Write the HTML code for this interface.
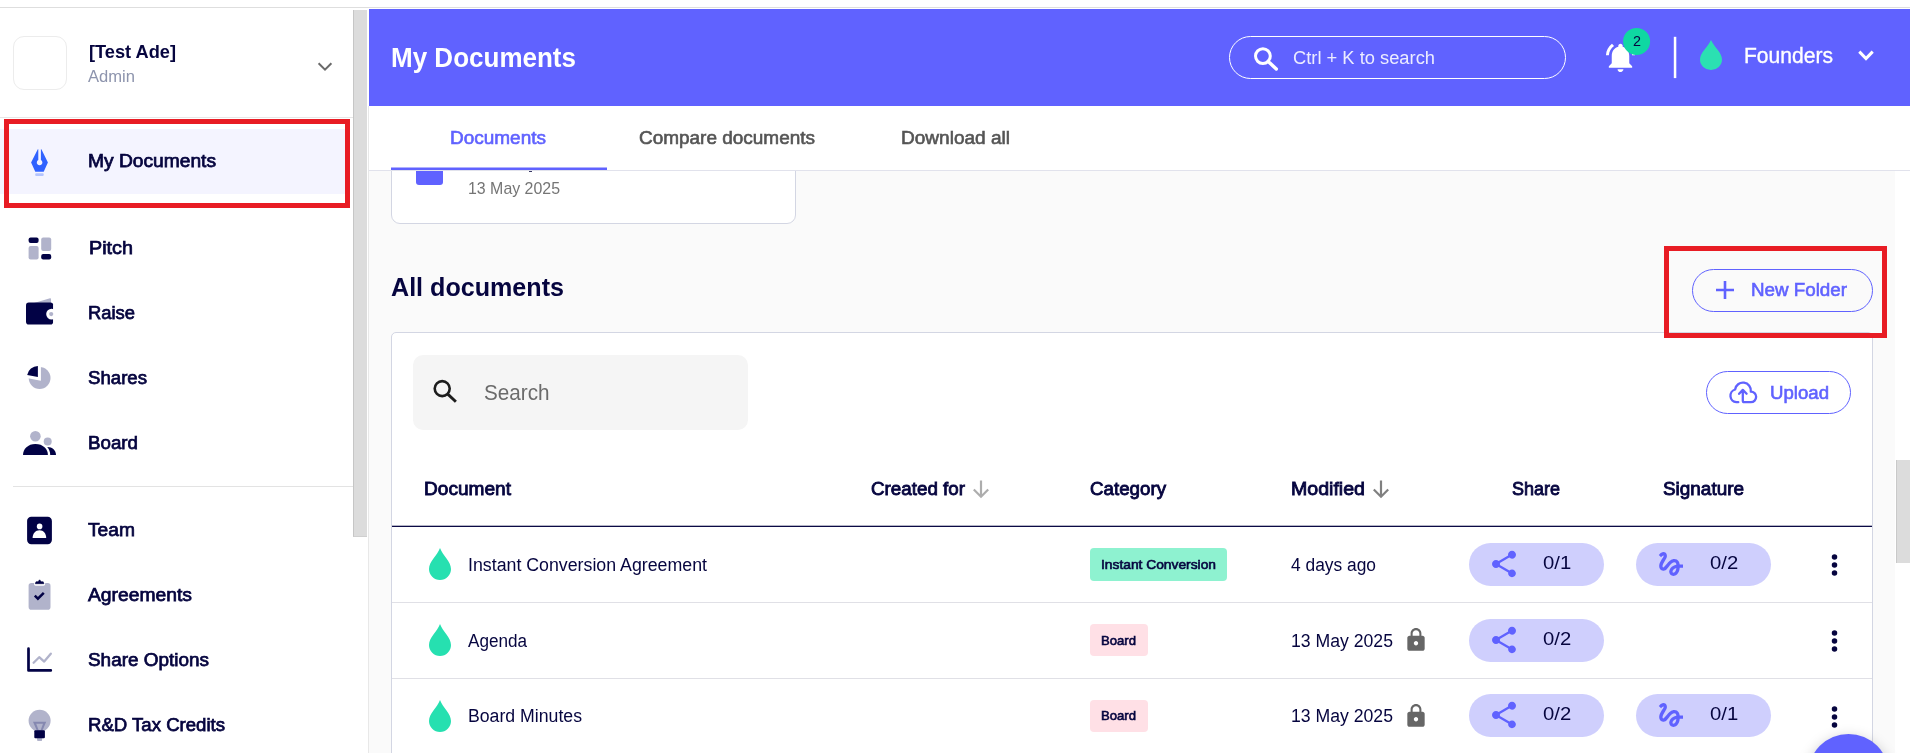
<!DOCTYPE html>
<html lang="en"><head><meta charset="utf-8"><title>My Documents</title>
<style>
html,body{margin:0;padding:0;background:#fff;}
body{width:1910px;height:753px;overflow:hidden;font-family:"Liberation Sans",sans-serif;}
#app{position:relative;width:1910px;height:753px;overflow:hidden;background:#fff;}
#app div,#app svg{position:absolute;box-sizing:border-box;}
.t{position:absolute;white-space:nowrap;transform-origin:0 50%;display:block;will-change:opacity;}

</style></head>
<body>
<div id="app">
<!-- top hairline -->
<div style="left:0;top:7px;width:1910px;height:1px;background:#dedede"></div>

<!-- ============ SIDEBAR ============ -->
<div style="left:0;top:8px;width:353px;height:745px;background:#fff"></div>
<!-- sidebar scrollbar -->
<div style="left:353px;top:8px;width:16px;height:745px;background:#fff"></div><div style="left:368px;top:106px;width:1px;height:647px;background:#e8e8e8"></div>
<div style="left:353px;top:10px;width:14px;height:527px;background:#dcdcdc;border-left:1px solid #c6c6c6;border-bottom:1px solid #cfcfcf"></div>
<!-- avatar -->
<div style="left:13px;top:36px;width:54px;height:54px;border:1px solid #ececec;border-radius:11px;background:#fff"></div>
<!-- chevron -->
<svg style="left:316px;top:60px" width="18" height="14" viewBox="0 0 18 14"><path d="M2.600 3.300 L9 9.700 L15.400 3.300" fill="none" stroke="#6a6a6a" stroke-width="2"/></svg>
<div style="left:0;top:117px;width:353px;height:1px;background:#e6e6e6"></div>
<!-- selected item -->
<div style="left:0;top:129px;width:350px;height:65px;background:#f4f4ff"></div>
<div style="left:4px;top:119px;width:346px;height:89px;border:5px solid #e81c24"></div>
<!-- divider between groups -->
<div style="left:13px;top:486px;width:340px;height:1px;background:#e3e3e3"></div>

<!-- ============ HEADER ============ -->
<div style="left:369px;top:9px;width:1541px;height:97px;background:#6062ff"></div>
<!-- search pill -->
<div style="left:1229px;top:36px;width:337px;height:43px;border:1.5px solid #fff;border-radius:22px"></div>
<svg style="left:1252px;top:45px" width="28" height="28" viewBox="0 0 28 28"><circle cx="10.900" cy="11.100" r="7.400" fill="none" stroke="#fff" stroke-width="3"/><path d="M16.200 16.400 L24.300 24" stroke="#fff" stroke-width="3.400" stroke-linecap="round"/></svg>
<!-- bell -->
<svg style="left:1603.200px;top:40.400px" width="35" height="35" viewBox="0 0 24 24"><path d="M7.580 4.080L6.150 2.650C3.750 4.480 2.170 7.300 2.030 10.500h2c.150-2.650 1.510-4.970 3.550-6.420zm12.390 6.420h2c-.150-3.200-1.730-6.020-4.120-7.850l-1.420 1.430c2.020 1.450 3.390 3.770 3.540 6.420zM18 11c0-3.070-1.640-5.640-4.500-6.320V4c0-.830-.670-1.500-1.500-1.500s-1.500.670-1.500 1.500v.680C7.630 5.360 6 7.920 6 11v5l-2 2v1h16v-1l-2-2v-5zm-6 11c.140 0 .270-.010.400-.040.650-.140 1.180-.580 1.440-1.180.100-.240.150-.500.150-.780h-4c.010 1.100.900 2 2.010 2z" fill="#fff"/></svg>
<svg style="left:1620px;top:25px" width="34" height="34" viewBox="0 0 34 34"><circle cx="16.600" cy="16.400" r="13.500" fill="#0fd8a2"/></svg>
<!-- vertical divider -->
<svg style="left:1672px;top:36px" width="6" height="43" viewBox="0 0 6 43"><rect x="1.800" y=".8" width="2.500" height="41.300" fill="#fff"/></svg>
<!-- drop -->
<svg style="left:1698px;top:39px" width="26" height="32" viewBox="0 0 26 32"><path d="M13 1 C10 8 2 13.500 2 20.500 a11 10.500 0 0 0 22 0 C24 13.500 16 8 13 1z" fill="#2be0b2"/></svg>
<!-- chevron -->
<svg style="left:1855px;top:47px" width="22" height="18" viewBox="0 0 22 18"><path d="M4.300 4.600 L11 11.500 L17.700 4.600" fill="none" stroke="#fff" stroke-width="3"/></svg>

<!-- ============ TABS ============ -->
<div style="left:369px;top:106px;width:1541px;height:65px;background:#fff;border-bottom:1px solid #e1e2ec"></div>

<!-- ============ CONTENT ============ -->
<div style="left:369px;top:171px;width:1526px;height:582px;background:#fafafa"></div>
<!-- page scrollbar -->
<div style="left:1895px;top:171px;width:15px;height:582px;background:#fff"></div>
<div style="left:1896px;top:460px;width:14px;height:103px;background:#dcdcdc;border-left:1px solid #c9c9c9"></div>
<!-- folder card -->
<div style="left:391px;top:150px;width:405px;height:74px;background:#fff;border:1px solid #d3d6e3;border-radius:9px;clip-path:inset(21px 0 0 0)"></div>
<div style="left:416px;top:171px;width:27px;height:14px;background:#6062ff;border-radius:0 0 3px 3px"></div>
<div style="left:529px;top:171px;width:3px;height:1px;background:#3a3a66"></div>
<!-- tab underline -->
<svg style="left:391px;top:166px" width="216" height="5" viewBox="0 0 216 5"><rect x="0" y="1.5" width="216" height="2.500" fill="#6062ff"/></svg>

<!-- new folder button -->
<div style="left:1692px;top:269px;width:181px;height:43px;border:1px solid #6062ff;border-radius:22px"></div>
<svg style="left:1713.600px;top:279px" width="22" height="22" viewBox="0 0 22 22"><path d="M11 2v18M2 11h18" stroke="#6062ff" stroke-width="2.600"/></svg>
<!-- table card -->
<div style="left:391px;top:332px;width:1482px;height:440px;background:#fff;border:1px solid #d3d6e3;border-radius:5px"></div>
<!-- red box around new folder -->
<div style="left:1664px;top:246px;width:223px;height:92px;border:5px solid #e81c24"></div>
<!-- search box -->
<div style="left:413px;top:355px;width:335px;height:75px;background:#f5f5f5;border-radius:10px"></div>
<svg style="left:431px;top:378px" width="28" height="28" viewBox="0 0 28 28"><circle cx="11.200" cy="10.600" r="7.500" fill="none" stroke="#1d1d1d" stroke-width="2.600"/><path d="M16.500 15.900 L24.900 23.800" stroke="#1d1d1d" stroke-width="2.900"/></svg>
<!-- upload button -->
<div style="left:1706px;top:371px;width:145px;height:43px;border:1px solid #6062ff;border-radius:22px"></div>
<svg style="left:1727px;top:378px" width="32" height="28" viewBox="0 0 32 28"><path d="M11.300 24.200L9.300 24.200A6.500 6.500 0 0 1 8.100 11.500A7.900 7.900 0 0 1 23.800 13.600A5.300 5.300 0 0 1 23.900 24.200L17.200 24.200Q15.800 24.200 15.800 22.800L15.800 12.200M12.100 15.800L15.800 11.900L19.600 15.800" fill="none" stroke="#6062ff" stroke-width="2.300" stroke-linecap="round" stroke-linejoin="round"/></svg>
<!-- sort arrows -->
<svg style="left:970.8px;top:479px" width="20" height="22" viewBox="0 0 20 22"><path d="M10 1.500v16M2.800 10.500L10 17.800l7.200-7.300" fill="none" stroke="#adadad" stroke-width="2.200"/></svg>
<svg style="left:1370.8px;top:479px" width="20" height="22" viewBox="0 0 20 22"><path d="M10 1.500v16M2.800 10.500L10 17.800l7.200-7.300" fill="none" stroke="#808080" stroke-width="2.200"/></svg>
<!-- header rule and row separators -->
<div style="left:392px;top:525px;width:1480px;height:1px;background:rgba(6,5,63,.3)"></div><div style="left:392px;top:526px;width:1480px;height:1px;background:#0b0a45"></div>
<div style="left:392px;top:602px;width:1480px;height:1px;background:#e0e0e6"></div>
<div style="left:392px;top:678px;width:1480px;height:1px;background:#e0e0e6"></div>
<!-- rows -->
<svg style="left:427px;top:547.4px" width="26" height="34" viewBox="0 0 26 34"><path d="M13 1 C10.200 8.500 2 14.500 2 22 a11 11 0 0 0 22 0 C24 14.500 15.800 8.500 13 1z" fill="#26e0b0"/></svg>
<div style="left:1090px;top:548.0px;width:137px;height:33px;background:#8ef2d0;border-radius:4px"></div>
<div style="left:1469px;top:542.9px;width:135px;height:43px;background:#cfcffd;border-radius:22px"></div>
<svg style="left:1487.5px;top:548.2px" width="32" height="32" viewBox="0 0 24 24"><path d="M18 16.08c-.76 0-1.440.3-1.960.77L8.910 12.700c.050-.230.090-.460.090-.700s-.040-.470-.090-.700l7.050-4.110c.540.500 1.250.810 2.040.810 1.660 0 3-1.340 3-3s-1.340-3-3-3-3 1.340-3 3c0 .240.040.470.090.700L8.040 9.810C7.500 9.310 6.790 9 6 9c-1.660 0-3 1.340-3 3s1.340 3 3 3c.790 0 1.500-.310 2.040-.810l7.120 4.160c-.050.210-.080.430-.080.650 0 1.610 1.310 2.920 2.920 2.920 1.610 0 2.920-1.310 2.920-2.920s-1.310-2.920-2.920-2.920z" fill="#6062ff"/></svg>
<div style="left:1636px;top:542.9px;width:135px;height:43px;background:#cfcffd;border-radius:22px"></div>
<svg style="left:1654.7px;top:547.8px" width="32" height="32" viewBox="0 0 24 24"><path d="M4.590 6.890c.700-.710 1.400-1.350 1.710-1.220.500.200 0 1.030-.300 1.520-.250.420-2.860 3.890-2.860 6.310 0 1.280.480 2.340 1.340 2.980.750.560 1.740.730 2.640.460 1.070-.310 1.950-1.400 3.060-2.770 1.210-1.490 2.830-3.440 4.080-3.440 1.630 0 1.650 1.010 1.760 1.790-3.780.640-5.380 3.670-5.380 5.370 0 1.700 1.440 3.090 3.210 3.090 1.630 0 4.290-1.330 4.690-6.100H21v-2.500h-2.470c-.150-1.650-1.090-4.200-4.030-4.200-2.250 0-4.180 1.910-4.940 2.840-.580.730-2.060 2.480-2.290 2.720-.250.300-.680.840-1.110.840-.450 0-.720-.830-.360-1.920.350-1.090 1.400-2.860 1.850-3.520.780-1.140 1.300-1.920 1.300-3.280C8.950 3.690 7.310 3 6.440 3 5.120 3 3.970 4 3.720 4.250c-.360.360-.660.660-.880.930l1.750 1.710zm9.290 11.660c-.310 0-.740-.260-.740-.720 0-.600.730-2.200 2.870-2.760-.300 2.690-1.430 3.480-2.130 3.480z" fill="#6062ff"/></svg>
<svg style="left:427px;top:622.8px" width="26" height="34" viewBox="0 0 26 34"><path d="M13 1 C10.200 8.500 2 14.500 2 22 a11 11 0 0 0 22 0 C24 14.500 15.800 8.500 13 1z" fill="#26e0b0"/></svg>
<div style="left:1090px;top:624px;width:58px;height:32px;background:#ffe0e6;border-radius:4px"></div>
<svg style="left:1402.8px;top:627.1px" width="26" height="26" viewBox="0 0 24 24"><path d="M18 8h-1V6c0-2.760-2.240-5-5-5S7 3.240 7 6v2H6c-1.100 0-2 .900-2 2v10c0 1.100.900 2 2 2h12c1.100 0 2-.900 2-2V10c0-1.100-.900-2-2-2zm-6 9c-1.100 0-2-.900-2-2s.900-2 2-2 2 .900 2 2-.900 2-2 2zm3.100-9H8.900V6c0-1.710 1.390-3.100 3.100-3.100 1.710 0 3.100 1.390 3.100 3.100v2z" fill="#666"/></svg>
<div style="left:1469px;top:619px;width:135px;height:43px;background:#cfcffd;border-radius:22px"></div>
<svg style="left:1487.5px;top:624.3px" width="32" height="32" viewBox="0 0 24 24"><path d="M18 16.08c-.76 0-1.440.3-1.960.77L8.910 12.700c.050-.230.090-.460.090-.700s-.040-.470-.090-.700l7.050-4.110c.540.500 1.250.810 2.040.810 1.660 0 3-1.340 3-3s-1.340-3-3-3-3 1.340-3 3c0 .240.040.470.090.700L8.040 9.810C7.500 9.310 6.790 9 6 9c-1.660 0-3 1.340-3 3s1.340 3 3 3c.790 0 1.500-.310 2.040-.810l7.120 4.160c-.050.210-.080.430-.080.650 0 1.610 1.310 2.920 2.920 2.920 1.610 0 2.920-1.310 2.920-2.920s-1.310-2.920-2.920-2.920z" fill="#6062ff"/></svg>
<svg style="left:427px;top:698.7px" width="26" height="34" viewBox="0 0 26 34"><path d="M13 1 C10.200 8.500 2 14.500 2 22 a11 11 0 0 0 22 0 C24 14.500 15.800 8.500 13 1z" fill="#26e0b0"/></svg>
<div style="left:1090px;top:700px;width:58px;height:32px;background:#ffe0e6;border-radius:4px"></div>
<svg style="left:1402.8px;top:702.7px" width="26" height="26" viewBox="0 0 24 24"><path d="M18 8h-1V6c0-2.760-2.240-5-5-5S7 3.240 7 6v2H6c-1.100 0-2 .900-2 2v10c0 1.100.900 2 2 2h12c1.100 0 2-.900 2-2V10c0-1.100-.900-2-2-2zm-6 9c-1.100 0-2-.900-2-2s.900-2 2-2 2 .900 2 2-.900 2-2 2zm3.100-9H8.900V6c0-1.710 1.390-3.100 3.100-3.100 1.710 0 3.100 1.390 3.100 3.100v2z" fill="#666"/></svg>
<div style="left:1469px;top:693.7px;width:135px;height:43px;background:#cfcffd;border-radius:22px"></div>
<svg style="left:1487.5px;top:699.0px" width="32" height="32" viewBox="0 0 24 24"><path d="M18 16.08c-.76 0-1.440.3-1.960.77L8.910 12.700c.050-.230.090-.460.090-.700s-.040-.470-.090-.700l7.050-4.110c.540.500 1.250.810 2.040.810 1.660 0 3-1.340 3-3s-1.340-3-3-3-3 1.340-3 3c0 .240.040.470.090.700L8.040 9.810C7.500 9.310 6.790 9 6 9c-1.660 0-3 1.340-3 3s1.340 3 3 3c.790 0 1.500-.310 2.040-.810l7.120 4.160c-.050.210-.080.430-.080.650 0 1.610 1.310 2.920 2.920 2.920 1.610 0 2.920-1.310 2.920-2.920s-1.310-2.920-2.920-2.920z" fill="#6062ff"/></svg>
<div style="left:1636px;top:693.7px;width:135px;height:43px;background:#cfcffd;border-radius:22px"></div>
<svg style="left:1654.7px;top:698.6px" width="32" height="32" viewBox="0 0 24 24"><path d="M4.590 6.890c.700-.710 1.400-1.350 1.710-1.220.500.200 0 1.030-.300 1.520-.250.420-2.860 3.890-2.860 6.310 0 1.280.480 2.340 1.340 2.980.750.560 1.740.730 2.640.460 1.070-.310 1.950-1.400 3.060-2.770 1.210-1.490 2.830-3.440 4.080-3.440 1.630 0 1.650 1.010 1.760 1.790-3.780.640-5.380 3.670-5.380 5.370 0 1.700 1.440 3.090 3.210 3.090 1.630 0 4.290-1.330 4.690-6.100H21v-2.500h-2.470c-.150-1.650-1.090-4.200-4.030-4.200-2.250 0-4.180 1.910-4.940 2.840-.580.730-2.060 2.480-2.290 2.720-.250.300-.680.840-1.110.840-.450 0-.720-.830-.360-1.920.350-1.090 1.400-2.860 1.850-3.520.780-1.140 1.300-1.920 1.300-3.280C8.950 3.690 7.310 3 6.440 3 5.120 3 3.970 4 3.720 4.250c-.360.360-.660.660-.880.930l1.750 1.710zm9.290 11.660c-.310 0-.740-.260-.740-.720 0-.600.730-2.200 2.870-2.760-.300 2.690-1.430 3.480-2.130 3.480z" fill="#6062ff"/></svg>
<svg style="left:1828px;top:551.0px" width="13" height="28" viewBox="0 0 13 28"><circle cx="6.500" cy="5.900" r="2.750" fill="#06053f"/><circle cx="6.500" cy="14" r="2.750" fill="#06053f"/><circle cx="6.500" cy="22.100" r="2.750" fill="#06053f"/></svg>
<svg style="left:1828px;top:626.7px" width="13" height="28" viewBox="0 0 13 28"><circle cx="6.500" cy="5.900" r="2.750" fill="#06053f"/><circle cx="6.500" cy="14" r="2.750" fill="#06053f"/><circle cx="6.500" cy="22.100" r="2.750" fill="#06053f"/></svg>
<svg style="left:1828px;top:702.6px" width="13" height="28" viewBox="0 0 13 28"><circle cx="6.500" cy="5.900" r="2.750" fill="#06053f"/><circle cx="6.500" cy="14" r="2.750" fill="#06053f"/><circle cx="6.500" cy="22.100" r="2.750" fill="#06053f"/></svg>
<div style="left:1808px;top:734px;width:81px;height:81px;border-radius:41px;background:#6062ff;box-shadow:0 4px 14px rgba(0,0,0,.25)"></div>
<!-- sidebar icons (absolute coords) -->
<svg style="left:0;top:0" width="80" height="753" viewBox="0 0 80 753">
<g id="ic-docs">
<path d="M37.800 149.200 L38.300 149.200 L38.300 160 A2.800 2.800 0 1 0 40.900 160 L40.900 149.200 L41.400 149.200 L47.900 162.600 L43.700 171.800 L35.300 171.800 L31.100 162.600 Z" fill="#3062ff"/>
<rect x="35.200" y="173.300" width="8.500" height="2.600" rx="1" fill="#b4c4ff"/>
</g>
<g id="ic-pitch">
<rect x="28.600" y="237.600" width="10" height="5.300" rx="2" fill="#020245"/>
<rect x="41.200" y="237.600" width="10" height="13.300" rx="2" fill="#b1b3cb"/>
<rect x="28.600" y="245.900" width="10" height="13.600" rx="2" fill="#b1b3cb"/>
<rect x="41.200" y="254.100" width="10" height="5.400" rx="2" fill="#020245"/>
</g>
<g id="ic-raise">
<path d="M34 303 L50 298.200 Q51 298 51 299 L51 303 Z" fill="#b1b3cb"/>
<rect x="26" y="302.600" width="27.200" height="21.900" rx="2.800" fill="#020245"/>
<circle cx="51.600" cy="314.100" r="5.400" fill="#fff"/>
<rect x="53.200" y="305" width="5" height="18" fill="#fff"/>
<circle cx="51.200" cy="314.100" r="2.100" fill="#b1b3cb"/>
</g>
<g id="ic-shares">
<circle cx="39.600" cy="378" r="10.900" fill="#b1b3cb"/>
<path d="M40.900 380.800 L40.900 360 L24 360 L24 377.600 Z" fill="#fff"/>
<path d="M37.900 377 L37.900 366 A10.900 10.900 0 0 0 27.200 374.900 Z" fill="#020245"/>
</g>
<g id="ic-board">
<circle cx="35.400" cy="436.300" r="5.300" fill="#b1b3cb"/>
<circle cx="47.700" cy="441.600" r="4" fill="#b1b3cb"/>
<path d="M23 454.900 C23 449 28 444 35.400 444 C43 444 47.900 449 47.900 454.900 Z" fill="#020245"/>
<path d="M47.200 447 C52.500 447 56 450.500 56 454.900 L50.200 454.900 C50.200 452 49.200 449.200 47.200 447 Z" fill="#020245"/>
</g>
<g id="ic-team">
<rect x="27.100" y="516.800" width="24.800" height="27.400" rx="4.200" fill="#020245"/>
<circle cx="39.600" cy="526.400" r="2.800" fill="#fff"/>
<path d="M32.600 537.900 C32.600 533.500 35.500 530.200 39.500 530.200 C43.500 530.200 46.200 533.500 46.200 537.900 Z" fill="#fff"/>
</g>
<g id="ic-agree">
<rect x="28.600" y="583" width="21.900" height="26.700" rx="2.800" fill="#b1b3cb"/>
<path d="M34 583 L34 582.500 L37.500 579 L41.700 579 L45.200 582.500 L45.200 583 L45.200 584 Q45.200 585.800 43.500 585.800 L35.700 585.800 Q34 585.800 34 584 Z" fill="#fff"/>
<path d="M35.300 583.700 L36 581.800 L38 581.800 L39.600 579.800 L41.200 581.800 L43.200 581.800 L43.900 583.700 Z" fill="#020245" stroke="#020245" stroke-width=".6" stroke-linejoin="round"/>
<path d="M34.800 595.700 L37.900 598.700 L43.800 592.900" fill="none" stroke="#020245" stroke-width="2.500"/>
</g>
<g id="ic-options">
<path d="M28.500 648.700 L28.500 670.400 L50.800 670.400" fill="none" stroke="#020245" stroke-width="2.700" stroke-linecap="round" stroke-linejoin="round"/>
<path d="M33.600 662.800 L39.200 657.200 L44.200 661.600 L50.800 653.700" fill="none" stroke="#b1b3cb" stroke-width="2.300" stroke-linecap="round" stroke-linejoin="round"/>
</g>
<g id="ic-rd">
<circle cx="39.600" cy="720.800" r="11" fill="#b1b3cb"/>
<path d="M36.800 738 L42.400 738 L41.800 741 L37.400 741 Z" fill="#b1b3cb"/>
<path d="M33 721.800 L46.200 721.800 L42.300 731 L37 731 Z M36.200 723.800 L38.600 730 L40.700 730 L43 723.800 Z" fill="#8588b0" fill-rule="evenodd"/>
<rect x="34.300" y="730.200" width="10.600" height="8" rx="1" fill="#020245"/>
</g>
</svg>

<span class="t" id="t0" style="left:88.5px;top:40.84px;font-size:18.6px;line-height:22.32px;font-weight:700;color:#06053f;transform:scaleX(0.9792);">[Test Ade]</span>
<span class="t" id="t1" style="left:88px;top:66.82px;font-size:16.3px;line-height:19.56px;font-weight:400;color:#8d94ad;transform:scaleX(1.0183);">Admin</span>
<span class="t" id="t2" style="left:88px;top:150.02px;font-size:18.8px;line-height:22.56px;font-weight:400;color:#06053f;transform:scaleX(1.0220);-webkit-text-stroke:0.75px currentColor;">My Documents</span>
<span class="t" id="t3" style="left:89px;top:237.02px;font-size:18.8px;line-height:22.56px;font-weight:400;color:#06053f;transform:scaleX(1.0535);-webkit-text-stroke:0.75px currentColor;">Pitch</span>
<span class="t" id="t4" style="left:88px;top:302.02px;font-size:18.8px;line-height:22.56px;font-weight:400;color:#06053f;transform:scaleX(0.9785);-webkit-text-stroke:0.75px currentColor;">Raise</span>
<span class="t" id="t5" style="left:88px;top:367.02px;font-size:18.8px;line-height:22.56px;font-weight:400;color:#06053f;transform:scaleX(0.9913);-webkit-text-stroke:0.75px currentColor;">Shares</span>
<span class="t" id="t6" style="left:88px;top:432.02px;font-size:18.8px;line-height:22.56px;font-weight:400;color:#06053f;transform:scaleX(0.9975);-webkit-text-stroke:0.75px currentColor;">Board</span>
<span class="t" id="t7" style="left:88px;top:519.02px;font-size:18.8px;line-height:22.56px;font-weight:400;color:#06053f;transform:scaleX(1.0231);-webkit-text-stroke:0.75px currentColor;">Team</span>
<span class="t" id="t8" style="left:88px;top:584.02px;font-size:18.8px;line-height:22.56px;font-weight:400;color:#06053f;transform:scaleX(1.0270);-webkit-text-stroke:0.75px currentColor;">Agreements</span>
<span class="t" id="t9" style="left:88px;top:649.02px;font-size:18.8px;line-height:22.56px;font-weight:400;color:#06053f;transform:scaleX(1.0078);-webkit-text-stroke:0.75px currentColor;">Share Options</span>
<span class="t" id="t10" style="left:88px;top:714.02px;font-size:18.8px;line-height:22.56px;font-weight:400;color:#06053f;transform:scaleX(0.9894);-webkit-text-stroke:0.75px currentColor;">R&amp;D Tax Credits</span>
<span class="t" id="t11" style="left:391px;top:42.10px;font-size:27px;line-height:32.4px;font-weight:700;color:#fff;transform:scaleX(0.9633);">My Documents</span>
<span class="t" id="t12" style="left:1293px;top:47.50px;font-size:18px;line-height:21.6px;font-weight:400;color:rgba(255,255,255,.88);transform:scaleX(1.0175);">Ctrl + K to search</span>
<span class="t" id="t13" style="left:1633px;top:33.40px;font-size:14px;line-height:16.8px;font-weight:400;color:#06053f;transform:scaleX(1.0261);">2</span>
<span class="t" id="t14" style="left:1744px;top:43.90px;font-size:21.5px;line-height:25.8px;font-weight:400;color:#fff;transform:scaleX(0.9797);-webkit-text-stroke:0.35px currentColor;">Founders</span>
<span class="t" id="t15" style="left:450px;top:127.50px;font-size:18px;line-height:21.6px;font-weight:400;color:#6062ff;transform:scaleX(1.0544);-webkit-text-stroke:0.6px currentColor;">Documents</span>
<span class="t" id="t16" style="left:639px;top:127.50px;font-size:18px;line-height:21.6px;font-weight:400;color:#555;transform:scaleX(1.0533);-webkit-text-stroke:0.6px currentColor;">Compare documents</span>
<span class="t" id="t17" style="left:901px;top:127.50px;font-size:18px;line-height:21.6px;font-weight:400;color:#555;transform:scaleX(1.0576);-webkit-text-stroke:0.6px currentColor;">Download all</span>
<span class="t" id="t18" style="left:468px;top:178.58px;font-size:16.2px;line-height:19.44px;font-weight:400;color:#757575;transform:scaleX(0.9830);">13 May 2025</span>
<span class="t" id="t19" style="left:391px;top:271.54px;font-size:26.6px;line-height:31.92px;font-weight:700;color:#06053f;transform:scaleX(0.9441);">All documents</span>
<span class="t" id="t20" style="left:1751px;top:279.50px;font-size:18px;line-height:21.6px;font-weight:400;color:#6062ff;transform:scaleX(1.0431);-webkit-text-stroke:0.6px currentColor;">New Folder</span>
<span class="t" id="t21" style="left:483.5px;top:378.72px;font-size:22.8px;line-height:27.36px;font-weight:400;color:#6b6b6b;transform:scaleX(0.9068);">Search</span>
<span class="t" id="t22" style="left:1770px;top:382.50px;font-size:18px;line-height:21.6px;font-weight:400;color:#6062ff;transform:scaleX(1.0342);-webkit-text-stroke:0.6px currentColor;">Upload</span>
<span class="t" id="t23" style="left:424px;top:478.04px;font-size:18.6px;line-height:22.32px;font-weight:400;color:#06053f;transform:scaleX(1.0265);-webkit-text-stroke:0.85px currentColor;">Document</span>
<span class="t" id="t24" style="left:871px;top:478.04px;font-size:18.6px;line-height:22.32px;font-weight:400;color:#06053f;transform:scaleX(1.0106);-webkit-text-stroke:0.85px currentColor;">Created for</span>
<span class="t" id="t25" style="left:1090px;top:478.04px;font-size:18.6px;line-height:22.32px;font-weight:400;color:#06053f;transform:scaleX(1.0072);-webkit-text-stroke:0.85px currentColor;">Category</span>
<span class="t" id="t26" style="left:1291px;top:478.04px;font-size:18.6px;line-height:22.32px;font-weight:400;color:#06053f;transform:scaleX(1.0529);-webkit-text-stroke:0.85px currentColor;">Modified</span>
<span class="t" id="t27" style="left:1512px;top:478.04px;font-size:18.6px;line-height:22.32px;font-weight:400;color:#06053f;transform:scaleX(0.9673);-webkit-text-stroke:0.85px currentColor;">Share</span>
<span class="t" id="t28" style="left:1663px;top:478.04px;font-size:18.6px;line-height:22.32px;font-weight:400;color:#06053f;transform:scaleX(1.0175);-webkit-text-stroke:0.85px currentColor;">Signature</span>
<span class="t" id="t29" style="left:468px;top:555.20px;font-size:18px;line-height:21.6px;font-weight:400;color:#06053f;transform:scaleX(0.9870);">Instant Conversion Agreement</span>
<span class="t" id="t30" style="left:468px;top:631.00px;font-size:18px;line-height:21.6px;font-weight:400;color:#06053f;transform:scaleX(0.9507);">Agenda</span>
<span class="t" id="t31" style="left:468px;top:706.00px;font-size:18px;line-height:21.6px;font-weight:400;color:#06053f;transform:scaleX(0.9822);">Board Minutes</span>
<span class="t" id="t32" style="left:1101px;top:557.20px;font-size:13px;line-height:15.6px;font-weight:400;color:#06053f;transform:scaleX(1.0608);-webkit-text-stroke:0.6px currentColor;">Instant Conversion</span>
<span class="t" id="t33" style="left:1101px;top:633.00px;font-size:13px;line-height:15.6px;font-weight:400;color:#06053f;transform:scaleX(1.0086);-webkit-text-stroke:0.6px currentColor;">Board</span>
<span class="t" id="t34" style="left:1101px;top:708.00px;font-size:13px;line-height:15.6px;font-weight:400;color:#06053f;transform:scaleX(1.0086);-webkit-text-stroke:0.6px currentColor;">Board</span>
<span class="t" id="t35" style="left:1291px;top:555.20px;font-size:18px;line-height:21.6px;font-weight:400;color:#06053f;transform:scaleX(0.9651);">4 days ago</span>
<span class="t" id="t36" style="left:1291px;top:631.00px;font-size:18px;line-height:21.6px;font-weight:400;color:#06053f;transform:scaleX(0.9800);">13 May 2025</span>
<span class="t" id="t37" style="left:1291px;top:706.00px;font-size:18px;line-height:21.6px;font-weight:400;color:#06053f;transform:scaleX(0.9800);">13 May 2025</span>
<span class="t" id="t38" style="left:1543.2px;top:551.80px;font-size:19px;line-height:22.8px;font-weight:400;color:#06053f;transform:scaleX(1.0673);">0/1</span>
<span class="t" id="t39" style="left:1543.2px;top:627.60px;font-size:19px;line-height:22.8px;font-weight:400;color:#06053f;transform:scaleX(1.0673);">0/2</span>
<span class="t" id="t40" style="left:1543.2px;top:702.60px;font-size:19px;line-height:22.8px;font-weight:400;color:#06053f;transform:scaleX(1.0673);">0/2</span>
<span class="t" id="t41" style="left:1710.2px;top:551.80px;font-size:19px;line-height:22.8px;font-weight:400;color:#06053f;transform:scaleX(1.0673);">0/2</span>
<span class="t" id="t42" style="left:1710.2px;top:702.60px;font-size:19px;line-height:22.8px;font-weight:400;color:#06053f;transform:scaleX(1.0673);">0/1</span>
</div>
</body></html>
